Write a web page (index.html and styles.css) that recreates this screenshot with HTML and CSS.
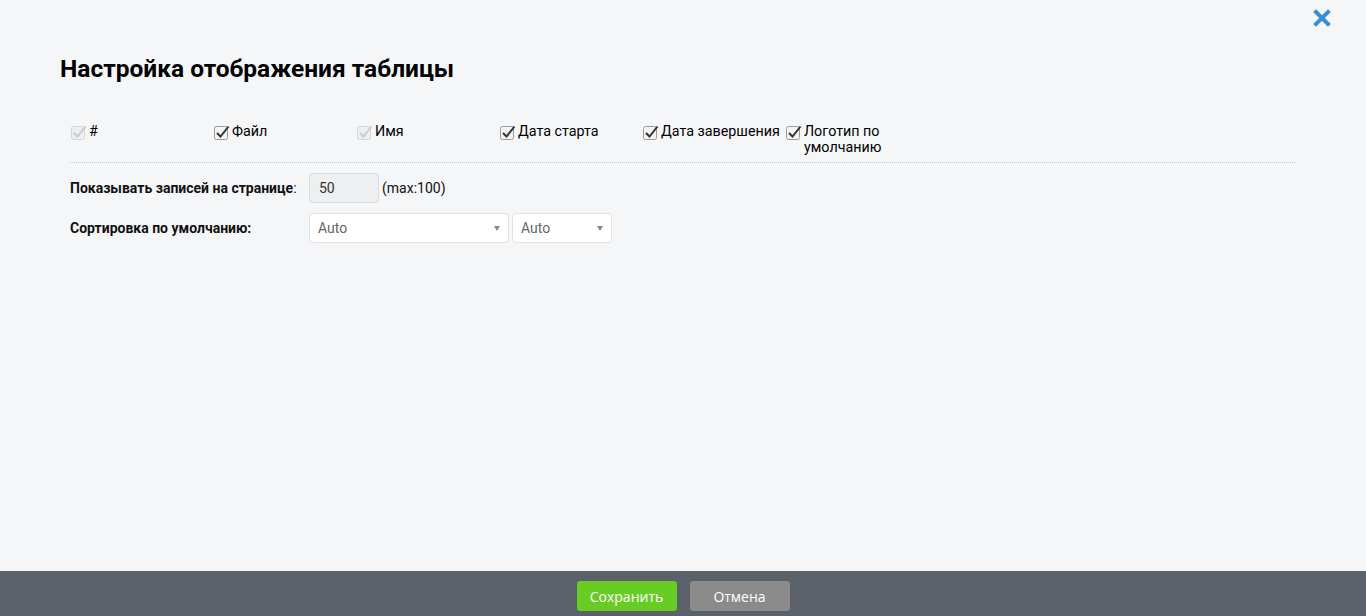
FILE: index.html
```html
<!DOCTYPE html>
<html lang="ru">
<head>
<meta charset="utf-8">
<title>Настройка отображения таблицы</title>
<link rel="stylesheet" href="styles.css">
</head>
<body>
<div class="page">
  <div class="content">
    <button class="close" aria-label="Закрыть">
      <svg width="18" height="18" viewBox="0 0 18 18"><path d="M3 3 L15 15 M15 3 L3 15" stroke="#3a8ed3" stroke-width="4" stroke-linecap="square"/></svg>
    </button>
    <h1 class="title">Настройка отображения таблицы</h1>
    <div class="columns">
      <label class="col"><span class="cb disabled"><svg viewBox="0 0 17 17" width="17" height="17"><rect x="1.5" y="3.5" width="13" height="13" rx="2" fill="#eceef0" stroke="#d4d6d9"/><path d="M4 10 L7.5 13.5 L15.5 3.5" fill="none" stroke="#c9cbcf" stroke-width="2"/></svg></span><span>#</span></label>
      <label class="col"><span class="cb"><svg viewBox="0 0 17 17" width="17" height="17"><rect x="1.5" y="3.5" width="13" height="13" rx="2" fill="#f2f3f4" stroke="#9a9a9a"/><path d="M4 10 L7.5 13.5 L15.5 3.5" fill="none" stroke="#333" stroke-width="2"/></svg></span><span>Файл</span></label>
      <label class="col"><span class="cb disabled"><svg viewBox="0 0 17 17" width="17" height="17"><rect x="1.5" y="3.5" width="13" height="13" rx="2" fill="#eceef0" stroke="#d4d6d9"/><path d="M4 10 L7.5 13.5 L15.5 3.5" fill="none" stroke="#c9cbcf" stroke-width="2"/></svg></span><span>Имя</span></label>
      <label class="col"><span class="cb"><svg viewBox="0 0 17 17" width="17" height="17"><rect x="1.5" y="3.5" width="13" height="13" rx="2" fill="#f2f3f4" stroke="#9a9a9a"/><path d="M4 10 L7.5 13.5 L15.5 3.5" fill="none" stroke="#333" stroke-width="2"/></svg></span><span>Дата старта</span></label>
      <label class="col"><span class="cb"><svg viewBox="0 0 17 17" width="17" height="17"><rect x="1.5" y="3.5" width="13" height="13" rx="2" fill="#f2f3f4" stroke="#9a9a9a"/><path d="M4 10 L7.5 13.5 L15.5 3.5" fill="none" stroke="#333" stroke-width="2"/></svg></span><span>Дата завершения</span></label>
      <label class="col"><span class="cb"><svg viewBox="0 0 17 17" width="17" height="17"><rect x="1.5" y="3.5" width="13" height="13" rx="2" fill="#f2f3f4" stroke="#9a9a9a"/><path d="M4 10 L7.5 13.5 L15.5 3.5" fill="none" stroke="#333" stroke-width="2"/></svg></span><span>Логотип по<br>умолчанию</span></label>
    </div>
    <div class="form">
      <div class="row">
        <span class="label">Показывать записей на странице<span class="colon">:</span></span>
        <span class="input">50</span>
        <span class="hint">(max:100)</span>
      </div>
      <div class="row">
        <span class="label">Сортировка по умолчанию:</span>
        <span class="select wide">Auto<span class="arrow"></span></span>
        <span class="select narrow">Auto<span class="arrow"></span></span>
      </div>
    </div>
  </div>
  <div class="footer">
    <button class="btn save">Сохранить</button>
    <button class="btn cancel">Отмена</button>
  </div>
</div>
</body>
</html>
```
FILE: styles.css
```css
* { box-sizing: border-box; }
html, body { margin: 0; padding: 0; height: 100%; }
body {
  background: #f5f6f8;
  font-family: Roboto, "Liberation Sans", sans-serif;
  color: #111;
}
.page {
  height: 616px;
  display: flex;
  flex-direction: column;
}
.content {
  flex: 1;
  position: relative;
  padding: 53px 71px 0 60px;
}
.close {
  position: absolute;
  top: 9px;
  right: 35px;
  border: 0;
  background: none;
  padding: 0;
  width: 18px;
  height: 18px;
  cursor: pointer;
}
.close svg { display: block; }
.title {
  margin: 0;
  font-size: 24.5px;
  font-weight: 700;
  line-height: 32px;
  color: #000;
}
.columns {
  margin: 38px 0 0 10px;
  display: flex;
  border-bottom: 1px dotted #c8c9cb;
  padding-bottom: 7px;
}
.col {
  width: 143px;
  display: flex;
  align-items: flex-start;
  font-size: 14.3px;
  line-height: 16px;
  color: #000;
}
.cb {
  width: 19px;
  flex: none;
  padding-top: 0;
}
.cb svg { display: block; }
.form {
  margin-left: 10px;
  padding-top: 10px;
}
.row {
  display: flex;
  align-items: center;
  margin-bottom: 10px;
  height: 30px;
}
.label {
  width: 239px;
  font-size: 14px;
  font-weight: 700;
  color: #111;
}
.colon { font-weight: 400; }
.input {
  width: 70px;
  height: 30px;
  border: 1px solid #d9dadc;
  border-radius: 4px;
  background: #eeeff1;
  font-size: 14px;
  line-height: 28px;
  padding-left: 9px;
  color: #333;
}
.hint {
  margin-left: 3px;
  font-size: 14px;
  color: #111;
}
.select {
  position: relative;
  height: 30px;
  border: 1px solid #e0e1e3;
  border-radius: 4px;
  background: #fff;
  font-size: 14px;
  line-height: 28px;
  padding-left: 8px;
  color: #666;
}
.select.wide { width: 200px; }
.select.narrow { width: 100px; margin-left: 3px; }
.arrow {
  position: absolute;
  right: 8px;
  top: 12px;
  width: 0;
  height: 0;
  border-left: 3px solid transparent;
  border-right: 3px solid transparent;
  border-top: 5px solid #888;
}
.footer {
  height: 45px;
  background: #5a616b;
  display: flex;
  justify-content: center;
  align-items: flex-start;
  padding-top: 10px;
  gap: 13px;
}
.btn {
  width: 100px;
  height: 30px;
  border: 0;
  border-radius: 3px;
  font-family: "Open Sans", "Noto Sans", sans-serif;
  font-size: 14px;
  color: #fff;
  padding: 0;
  cursor: pointer;
}
.save { background: #67cc24; }
.cancel { background: #8a8a8a; }
```
